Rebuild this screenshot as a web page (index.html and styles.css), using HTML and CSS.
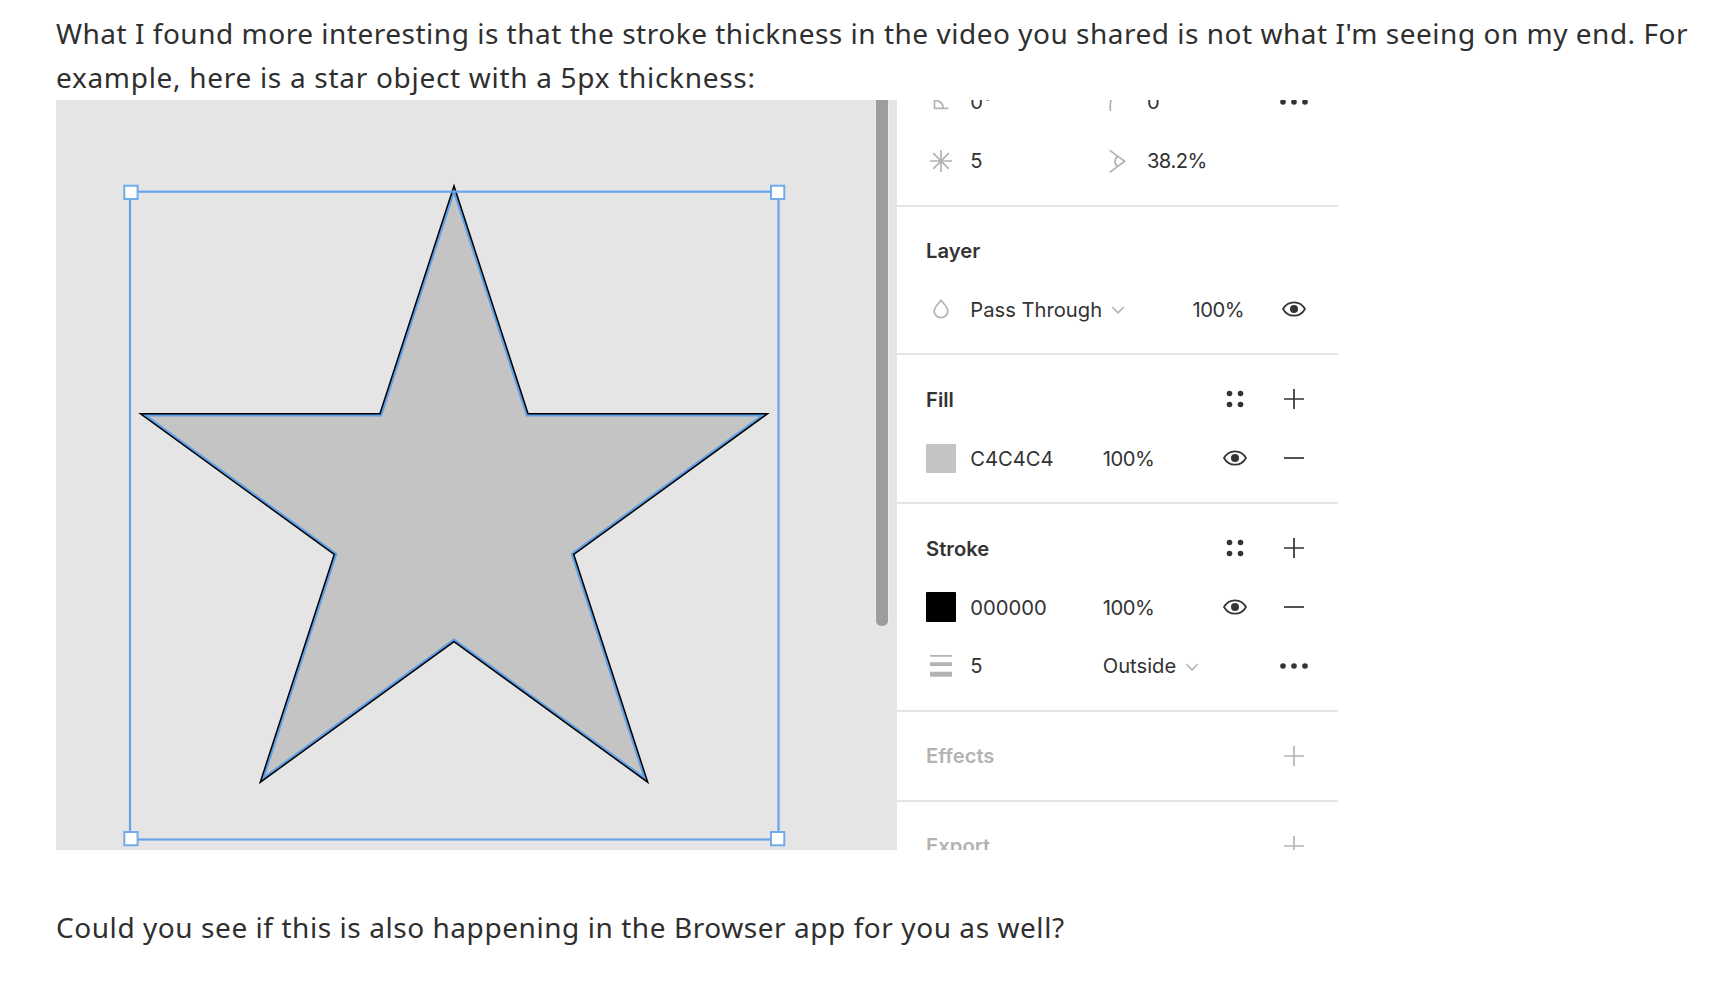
FILE: index.html
```html
<!DOCTYPE html>
<html lang="en">
<head>
    <meta charset="UTF-8">
    <meta name="viewport" content="width=device-width, initial-scale=1.0">
    <title>Stroke thickness</title>
    <link rel="stylesheet" href="styles.css">
</head>
<body>
    <svg class="symbols" width="0" height="0">
        <symbol id="eye" viewBox="0 0 24 24">
            <path d="M1 12C3.5 7.600 7.500 5.300 12 5.300S20.500 7.600 23 12C20.500 16.400 16.500 18.700 12 18.700S3.500 16.400 1 12Z"/>
            <circle class="solid" cx="12" cy="12" r="4"/>
        </symbol>
        <symbol id="plus" viewBox="0 0 24 24">
            <path d="M2 12H22M12 2V22"/>
        </symbol>
        <symbol id="minus" viewBox="0 0 24 24">
            <path d="M2 12H22"/>
        </symbol>
        <symbol id="styles" viewBox="0 0 24 24">
            <g class="solid">
                <circle cx="6.500" cy="6.500" r="2.800"/>
                <circle cx="17.500" cy="6.500" r="2.800"/>
                <circle cx="6.500" cy="17.500" r="2.800"/>
                <circle cx="17.500" cy="17.500" r="2.800"/>
            </g>
        </symbol>
        <symbol id="more" viewBox="0 0 30 24">
            <g class="solid">
                <circle cx="4" cy="12" r="2.800"/>
                <circle cx="15" cy="12" r="2.800"/>
                <circle cx="26" cy="12" r="2.800"/>
            </g>
        </symbol>
        <symbol id="chevron" viewBox="0 0 14 8">
            <path d="M1.200 1L7 6.800L12.800 1"/>
        </symbol>
    </svg>

    <div class="comment">
        <p class="intro">What I found more interesting is that the stroke thickness in the video you shared is not what I'm seeing on my end. For <span class="second-line">example, here is a star object with a 5px thickness:</span></p>

        <div class="editor">
            <div class="canvas">
                <svg class="drawing" viewBox="56 100 841 750">
                    <defs>
                        <path id="star" d="M454 191.600L526.800 415.500H762.100L571.700 553.800L644.400 777.700L454 639.400L263.600 777.700L336.300 553.800L145.900 415.500H381.200Z"/>
                    </defs>
                    <use href="#star" class="star-stroke"/>
                    <use href="#star" class="star-fill"/>
                    <rect class="bounds" x="130" y="191.700" width="648.500" height="647.800"/>
                    <g class="handles">
                        <rect x="124.300" y="185.700" width="13.300" height="13.300"/>
                        <rect x="771" y="185.700" width="13.300" height="13.300"/>
                        <rect x="124.300" y="832" width="13.300" height="13.300"/>
                        <rect x="771" y="832" width="13.300" height="13.300"/>
                    </g>
                </svg>
                <div class="scrollbar"></div>
            </div>

            <div class="panel">
                <div class="section section-top">
                    <div class="row">
                        <svg class="icon muted col-icon" viewBox="0 0 24 24"><path d="M5.500 4V18.300H19.500M5.500 10.300C10.500 10.300 14.200 13.500 14.200 18.300"/></svg>
                        <span class="col-value">0°</span>
                        <svg class="icon muted col-icon-2" viewBox="0 0 24 24"><path d="M5.300 21V15C5.300 8 9 4 16 4"/></svg>
                        <span class="col-value-2">0</span>
                        <svg class="icon wide col-end"><use href="#more"/></svg>
                    </div>
                    <div class="row">
                        <svg class="icon muted col-icon" viewBox="0 0 24 24"><path d="M12 1V23M1 12H23M4.200 4.200L19.800 19.800M19.800 4.200L4.200 19.800"/></svg>
                        <span class="col-value">5</span>
                        <svg class="icon muted col-icon-2" viewBox="0 0 24 24"><path d="M4.800 1.400L19.600 12.200L4.800 23.400M13 7.200C9 9.500 9 15.500 13 18"/></svg>
                        <span class="col-value-2">38.2%</span>
                    </div>
                </div>

                <div class="section">
                    <div class="row">
                        <h2>Layer</h2>
                    </div>
                    <div class="row">
                        <svg class="icon muted col-icon" viewBox="0 0 24 24"><path d="M12 3.300C9.500 6.500 5.200 10 5.200 14A6.800 6.600 0 0 0 18.800 14C18.800 10 14.500 6.500 12 3.300Z"/></svg>
                        <span class="col-value select">Pass Through <svg class="chevron"><use href="#chevron"/></svg></span>
                        <span class="col-layer-opacity">100%</span>
                        <svg class="icon col-end"><use href="#eye"/></svg>
                    </div>
                </div>

                <div class="section">
                    <div class="row">
                        <h2>Fill</h2>
                        <svg class="icon col-action"><use href="#styles"/></svg>
                        <svg class="icon col-end"><use href="#plus"/></svg>
                    </div>
                    <div class="row">
                        <span class="swatch fill-color col-icon"></span>
                        <span class="col-value">C4C4C4</span>
                        <span class="col-opacity percent">100%</span>
                        <svg class="icon col-action"><use href="#eye"/></svg>
                        <svg class="icon col-end"><use href="#minus"/></svg>
                    </div>
                </div>

                <div class="section">
                    <div class="row">
                        <h2>Stroke</h2>
                        <svg class="icon col-action"><use href="#styles"/></svg>
                        <svg class="icon col-end"><use href="#plus"/></svg>
                    </div>
                    <div class="row">
                        <span class="swatch stroke-color col-icon"></span>
                        <span class="col-value">000000</span>
                        <span class="col-opacity percent">100%</span>
                        <svg class="icon col-action"><use href="#eye"/></svg>
                        <svg class="icon col-end"><use href="#minus"/></svg>
                    </div>
                    <div class="row">
                        <svg class="icon muted col-icon" viewBox="0 0 24 24"><path class="solid" d="M1 1H23V2.800H1ZM1 8.300H23V12H1ZM1 17.700H23V22.700H1Z"/></svg>
                        <span class="col-value">5</span>
                        <span class="col-opacity select">Outside <svg class="chevron"><use href="#chevron"/></svg></span>
                        <svg class="icon wide col-end"><use href="#more"/></svg>
                    </div>
                </div>

                <div class="section disabled">
                    <div class="row">
                        <h2>Effects</h2>
                        <svg class="icon muted col-end"><use href="#plus"/></svg>
                    </div>
                </div>

                <div class="section disabled">
                    <div class="row">
                        <h2>Export</h2>
                        <svg class="icon muted col-end"><use href="#plus"/></svg>
                    </div>
                </div>
            </div>
        </div>

        <p class="question">Could you see if this is also happening in the Browser app for you as well?</p>
    </div>
</body>
</html>
```

FILE: styles.css
```css
body {
    margin: 0;
    background-color: #fff;
    color: #2f2f2f;
    font-family: "Noto Sans", sans-serif;
    overflow: hidden;
}

.symbols {
    display: block;
}

.comment {
    padding: 11px 0 0 56px;
}

.intro, .question {
    margin: 0;
    font-size: 28px;
    line-height: 44px;
    letter-spacing: 0.51px;
    white-space: nowrap;
}

.intro {
    padding-bottom: 1px;
}

.second-line {
    display: block;
    letter-spacing: 0.7px;
}

.question {
    margin-top: 55px;
    letter-spacing: 0.56px;
}

.editor {
    display: flex;
    width: 1282px;
    height: 750px;
    overflow: hidden;
}

/* Canvas */
.canvas {
    position: relative;
    width: 841px;
    background-color: #e5e5e5;
}

.drawing {
    display: block;
    width: 841px;
    height: 750px;
}

.star-stroke {
    fill: none;
    stroke: #000;
    stroke-width: 5;
    stroke-miterlimit: 10;
}

.star-fill {
    fill: #c4c4c4;
    stroke: #5e9fe6;
    stroke-width: 2;
}

.bounds {
    fill: none;
    stroke: #67a5e8;
    stroke-width: 2.2;
}

.handles {
    fill: #fff;
    stroke: #70abea;
    stroke-width: 2;
}

.scrollbar {
    position: absolute;
    top: 0;
    right: 8px;
    width: 12px;
    height: 526px;
    background-color: #9d9d9d;
    border: 1px solid #ececec;
    border-top: none;
    border-radius: 0 0 6px 6px;
}

/* Properties panel */
.panel {
    width: 441px;
    color: #333;
    font-family: Inter, sans-serif;
    font-size: 20.2px;
}

.section {
    padding: 14.6px 14.4px;
    border-bottom: 2px solid #e5e5e5;
}

.section-top {
    margin-top: -27.5px;
    padding-top: 0;
}

.row {
    display: grid;
    grid-template-columns: repeat(28, 14.72px);
    align-items: center;
    height: 58.8px;
    white-space: nowrap;
}

.row > * {
    grid-row: 1;
}

.row h2 {
    grid-column: 2 / 20;
    margin: 0;
    font-size: 20.2px;
    font-weight: 600;
}

.col-icon { grid-column: 1 / 5; }
.col-value { grid-column: 5 / 14; }
.col-icon-2 { grid-column: 13 / 17; }
.col-value-2 { grid-column: 17 / 24; letter-spacing: -0.5px; }
.col-opacity { grid-column: 14 / 21; }
.col-layer-opacity { grid-column: 20 / 25; padding-left: 1.5px; letter-spacing: -0.5px; }
.col-action { grid-column: 21 / 25; }
.col-end { grid-column: 25 / 29; }

.percent {
    letter-spacing: -0.5px;
}

.icon {
    width: 24px;
    height: 24px;
    justify-self: center;
    fill: none;
    stroke: #333;
    stroke-width: 1.7;
    color: #333;
}

.icon.wide {
    width: 30px;
}

.icon.muted {
    stroke: #b3b3b3;
    color: #b3b3b3;
}

.solid {
    fill: currentColor;
    stroke: none;
}

.select {
    display: flex;
    align-items: center;
    gap: 9px;
}

.chevron {
    flex: none;
    width: 14px;
    height: 8px;
    margin-top: 2px;
    fill: none;
    stroke: #b3b3b3;
    stroke-width: 1.7;
}

.swatch {
    justify-self: center;
    width: 29.4px;
    height: 29.4px;
    border-radius: 1px;
}

.fill-color {
    background-color: #c4c4c4;
}

.stroke-color {
    background-color: #000;
}

.disabled h2 {
    color: #b3b3b3;
}
```
